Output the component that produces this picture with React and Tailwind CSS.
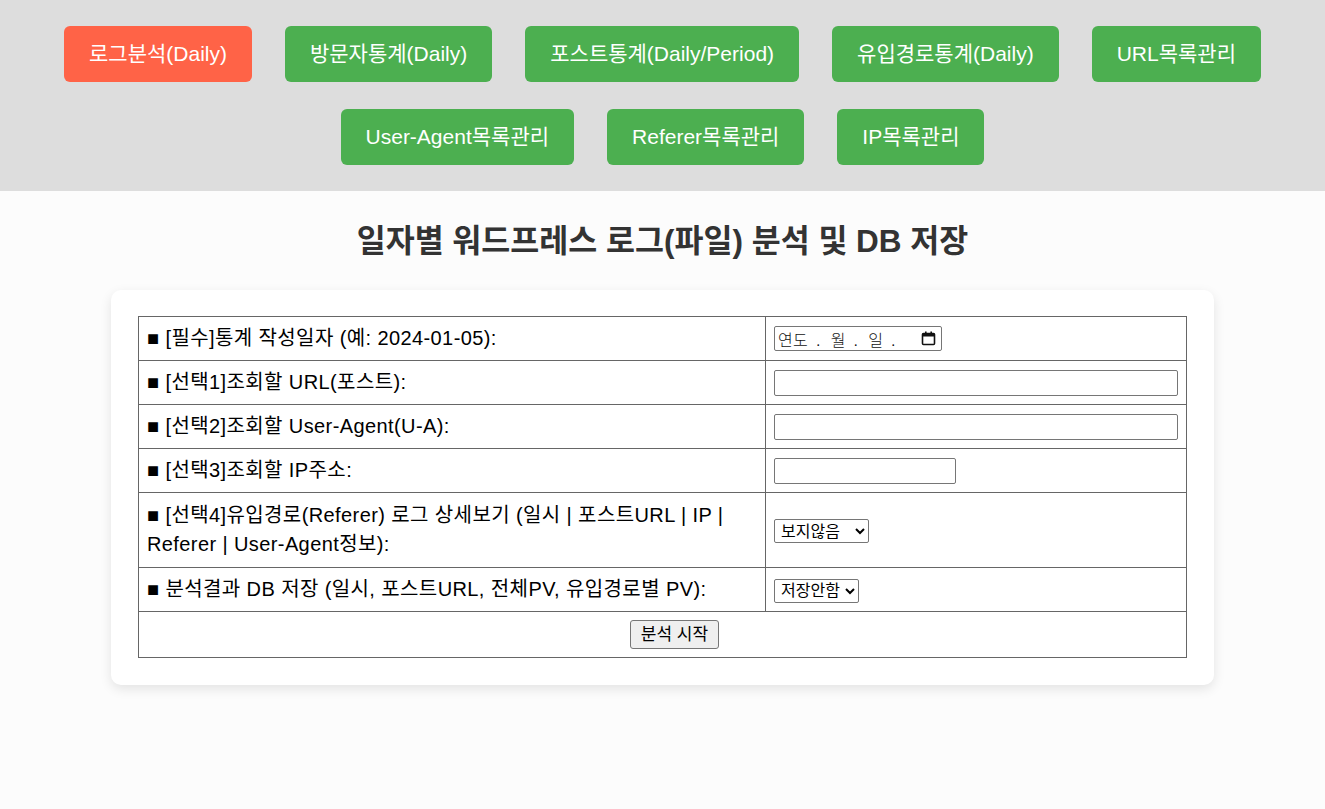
import React, { useState } from 'react';

const menus = [
  { label: '로그분석(Daily)', active: true },
  { label: '방문자통계(Daily)' },
  { label: '포스트통계(Daily/Period)' },
  { label: '유입경로통계(Daily)' },
  { label: 'URL목록관리' },
  { label: 'User-Agent목록관리' },
  { label: 'Referer목록관리' },
  { label: 'IP목록관리' },
];

const CalendarIcon = () => (
  <svg width="15" height="15" viewBox="0 0 15 15" className="block">
    <rect x="1.5" y="2.5" width="12" height="11" fill="none" stroke="#111" strokeWidth="1.6" rx="1" />
    <rect x="1.5" y="2.5" width="12" height="3" fill="#111" />
    <rect x="4" y="0.5" width="1.6" height="3" fill="#111" />
    <rect x="9.4" y="0.5" width="1.6" height="3" fill="#111" />
  </svg>
);

// chrome 날짜 입력칸 모양 (한국어 로케일)
const DateBox = () => (
  <div className="flex items-center w-[168px] h-[25px] border border-[#767676] rounded-[2px] pl-[3px] pr-[5px] text-[16px] leading-none text-[#111] font-['Noto_Sans_CJK_KR',sans-serif] font-light">
    <span>연도</span>
    <span className="ml-[8px]">.</span>
    <span className="ml-[10px]">월</span>
    <span className="ml-[8px]">.</span>
    <span className="ml-[10px]">일</span>
    <span className="ml-[8px]">.</span>
    <span className="ml-auto">
      <CalendarIcon />
    </span>
  </div>
);

const cellL = 'border border-[#666] px-2 py-[7px] leading-[29px] w-[627px] align-middle';
const cellR = 'border border-[#666] px-2 py-[7px] leading-[29px] align-middle';
const inputCls = 'block border border-[#767676] rounded-[2px] bg-white h-[26px] px-1 text-[15px] outline-none';
const selectCls = 'border border-[#767676] rounded-[2px] bg-white h-[24px] text-[16px] leading-[20px] pl-[2px]';

export default function App() {
  const [view, setView] = useState('no');
  const [save, setSave] = useState('no');

  return (
    <div className="min-h-[809px] bg-[#fcfcfc] font-['Liberation_Sans','Noto_Sans_CJK_KR',sans-serif] text-black">
      <nav className="bg-[#dddddd] flex flex-wrap justify-center gap-x-[33px] gap-y-[27px] px-10 pt-[26px] pb-[26px]">
        {menus.map((m) => (
          <a
            key={m.label}
            href="#"
            className={
              (m.active ? 'bg-[#ff6347]' : 'bg-[#4caf50]') +
              ' text-white text-[21px] leading-6 py-4 px-[25px] rounded-md whitespace-nowrap'
            }
          >
            {m.label}
          </a>
        ))}
      </nav>

      <h1 className="mt-[32px] text-center text-[31.5px] leading-[37px] font-bold text-[#333]">
        일자별 워드프레스 로그(파일) 분석 및 DB 저장
      </h1>

      <div className="mx-[111px] mt-[30px] bg-white rounded-[10px] shadow-[0_4px_12px_rgba(0,0,0,0.1)] px-[27px] pt-[26px] pb-[27px]">
        <form onSubmit={(e) => e.preventDefault()}>
          <table className="w-full border-collapse text-[20px] tracking-[0.4px]">
            <tbody>
              <tr>
                <td className={cellL}>■ [필수]통계 작성일자 (예: 2024-01-05):</td>
                <td className={cellR}>
                  <DateBox />
                </td>
              </tr>
              <tr>
                <td className={cellL}>■ [선택1]조회할 URL(포스트):</td>
                <td className={cellR}>
                  <input type="text" className={inputCls + ' w-full'} />
                </td>
              </tr>
              <tr>
                <td className={cellL}>■ [선택2]조회할 User-Agent(U-A):</td>
                <td className={cellR}>
                  <input type="text" className={inputCls + ' w-full'} />
                </td>
              </tr>
              <tr>
                <td className={cellL}>■ [선택3]조회할 IP주소:</td>
                <td className={cellR}>
                  <input type="text" className={inputCls + ' w-[182px]'} />
                </td>
              </tr>
              <tr>
                <td className="border border-[#666] px-2 py-2 leading-[29px] w-[627px] align-middle">
                  ■ [선택4]유입경로(Referer) 로그 상세보기 (일시 | 포스트URL | IP | Referer | User-Agent정보):
                </td>
                <td className={cellR}>
                  <select value={view} onChange={(e) => setView(e.target.value)} className={selectCls + ' w-[95px] tracking-normal'}>
                    <option value="no">보지않음</option>
                    <option value="yes">상세보기</option>
                  </select>
                </td>
              </tr>
              <tr>
                <td className={cellL}>■ 분석결과 DB 저장 (일시, 포스트URL, 전체PV, 유입경로별 PV):</td>
                <td className={cellR}>
                  <select value={save} onChange={(e) => setSave(e.target.value)} className={selectCls + ' w-[85px] tracking-normal'}>
                    <option value="no">저장안함</option>
                    <option value="yes">저장함</option>
                  </select>
                </td>
              </tr>
              <tr>
                <td colSpan={2} className="border border-[#666] px-2 py-2">
                  <div className="flex justify-center pl-[24px]">
                    <button
                      type="submit"
                      className="h-[29px] px-[10px] bg-[#efefef] border border-[#767676] rounded-[3px] text-[17px] leading-[27px] tracking-normal"
                    >
                      분석 시작
                    </button>
                  </div>
                </td>
              </tr>
            </tbody>
          </table>
        </form>
      </div>
    </div>
  );
}
